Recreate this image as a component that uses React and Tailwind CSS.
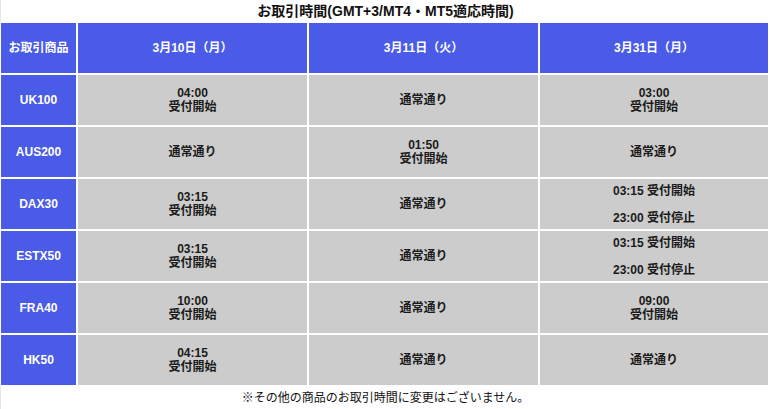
import { Fragment } from "react";

const columns = ["3月10日（月）", "3月11日（火）", "3月31日（月）"];

const rows = [
  { name: "UK100", cells: [["04:00", "受付開始"], ["通常通り"], ["03:00", "受付開始"]] },
  { name: "AUS200", cells: [["通常通り"], ["01:50", "受付開始"], ["通常通り"]] },
  { name: "DAX30", cells: [["03:15", "受付開始"], ["通常通り"], { split: ["03:15 受付開始", "23:00 受付停止"] }] },
  { name: "ESTX50", cells: [["03:15", "受付開始"], ["通常通り"], { split: ["03:15 受付開始", "23:00 受付停止"] }] },
  { name: "FRA40", cells: [["10:00", "受付開始"], ["通常通り"], ["09:00", "受付開始"]] },
  { name: "HK50", cells: [["04:15", "受付開始"], ["通常通り"], ["通常通り"]] },
];

const Cell = ({ value }) => {
  if (value.split) {
    return (
      <div className="bg-[#cccccc] flex flex-col items-center justify-center gap-[13px] text-[12px] leading-[14px] font-bold text-[#1a1a1a]">
        {value.split.map((line) => (
          <span key={line}>{line}</span>
        ))}
      </div>
    );
  }
  return (
    <div className="bg-[#cccccc] flex flex-col items-center justify-center text-[12px] leading-[14px] font-bold text-[#1a1a1a]">
      {value.map((line) => (
        <span key={line}>{line}</span>
      ))}
    </div>
  );
};

export default function App() {
  return (
    <div
      className="w-[770px] h-[409px] bg-white overflow-hidden"
      style={{ fontFamily: '"Liberation Sans", "Noto Sans CJK JP", sans-serif' }}
    >
      <div className="h-[21px] mb-[2px] border-l border-[#e6e6e6] flex items-center justify-center">
        <h1 className="text-[14px] font-bold text-[#111] leading-[20px]">
          お取引時間(GMT+3/MT4・MT5適応時間)
        </h1>
      </div>

      <div className="ml-[1px] w-[767px] grid grid-cols-[75px_229px_229px_228px] auto-rows-[50px] gap-[2px]">
        <div className="bg-[#4a5be7] flex items-center justify-center text-white text-[12px] font-bold">
          お取引商品
        </div>
        {columns.map((c) => (
          <div key={c} className="bg-[#4a5be7] flex items-center justify-center text-white text-[12px] font-bold">
            {c}
          </div>
        ))}

        {rows.map((row) => (
          <Fragment key={row.name}>
            <div className="bg-[#4a5be7] flex items-center justify-center text-white text-[12px] font-bold">
              {row.name}
            </div>
            {row.cells.map((cell, i) => (
              <Cell key={i} value={cell} />
            ))}
          </Fragment>
        ))}
      </div>

      <div className="mt-[2px] h-[22px] border-l border-[#e6e6e6] flex items-center justify-center">
        <p className="text-[12px] leading-[20px] text-[#111]">※その他の商品のお取引時間に変更はございません。</p>
      </div>
    </div>
  );
}
